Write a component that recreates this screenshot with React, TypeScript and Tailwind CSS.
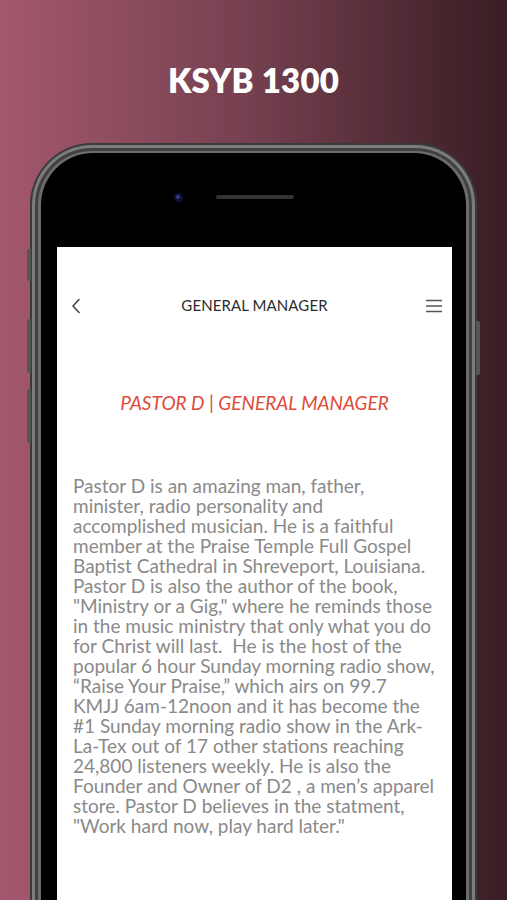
import React from 'react';

const bio =
  'Pastor D is an amazing man, father, minister, radio personality and accomplished musician. He is a faithful member at the Praise Temple Full Gospel Baptist Cathedral in Shreveport, Louisiana. Pastor D is also the author of the book, "Ministry or a Gig," where he reminds those in the music ministry that only what you do for Christ will last.  He is the host of the popular 6 hour Sunday morning radio show, \u201cRaise Your Praise,\u201d which airs on 99.7 KMJJ 6am-12noon and it has become the #1 Sunday morning radio show in the Ark-La-Tex out of 17 other stations reaching 24,800 listeners weekly. He is also the Founder and Owner of D2 , a men\u2019s apparel store. Pastor D believes in the statment, "Work hard now, play hard later."';

const App = () => {
  return (
    <div className="relative h-[900px] w-full overflow-hidden bg-gradient-to-r from-[#a4586e] via-[#74404f] to-[#3a1d24]">
      {/* headline */}
      <h1
        className="pt-[60px] text-center text-[33px] font-extrabold leading-[40px] tracking-[0.2px] text-white"
        style={{ fontFamily: 'Lato, "Noto Sans", sans-serif' }}
      >
        KSYB 1300
      </h1>

      {/* phone */}
      <div className="relative mx-auto mt-[43px] w-[447px]">
        {/* side buttons */}
        <div className="absolute left-[-3px] top-[106px] h-[32px] w-[4px] rounded-l-[2px] bg-[#555]" />
        <div className="absolute left-[-3px] top-[176px] h-[54px] w-[4px] rounded-l-[2px] bg-[#555]" />
        <div className="absolute left-[-3px] top-[246px] h-[54px] w-[4px] rounded-l-[2px] bg-[#555]" />
        <div className="absolute right-[-3px] top-[178px] h-[54px] w-[4px] rounded-r-[2px] bg-[#555]" />

        <div className="rounded-t-[62px] bg-[#3a3a3a] px-[2px] pt-[2px]">
          <div className="rounded-t-[60px] bg-[#7c7c7c] px-[3px] pt-[3px]">
            <div className="rounded-t-[57px] bg-[#404040] px-[3px] pt-[3px]">
              <div className="rounded-t-[54px] bg-[#6c6c6c] px-[3px] pt-[2px]">
                <div className="rounded-t-[52px] bg-black pl-[16px] pr-[14px] pt-[32px]">
                  {/* camera + speaker */}
                  <div className="flex h-[24px] items-center justify-center">
                    <div className="flex h-[9px] w-[9px] items-center justify-center rounded-full bg-[#0d1430]">
                      <div className="h-[4px] w-[4px] rounded-full bg-[#2b3f8a]" />
                    </div>
                    <div className="ml-[33px] h-[4px] w-[78px] rounded-full bg-[#333]" />
                    <div className="ml-[33px] w-[9px]" />
                  </div>

                  {/* screen */}
                  <div
                    className="mt-[38px] h-[670px] bg-white"
                    style={{ fontFamily: 'Lato, "Open Sans", sans-serif' }}
                  >
                    <div className="flex h-[118px] items-center justify-between px-[12px] pb-[1px]">
                      <svg width="14" height="16" viewBox="0 0 14 16" className="ml-[1px]">
                        <path d="M9 1.5 L3 8 L9 14.5" fill="none" stroke="#444" strokeWidth="1.6" strokeLinecap="round" strokeLinejoin="round" />
                      </svg>
                      <span className="text-[15px] font-normal tracking-[0.1px] text-[#2b2b2b]">GENERAL MANAGER</span>
                      <svg width="18" height="14" viewBox="0 0 18 14" className="mr-[-3px]">
                        <path d="M1 1.5 H17 M1 7 H17 M1 12.5 H17" fill="none" stroke="#555" strokeWidth="1.4" />
                      </svg>
                    </div>

                    <h2 className="mt-[26px] text-center text-[19px] italic leading-[24px] text-[#df4a3b]">
                      PASTOR D | GENERAL MANAGER
                    </h2>

                    <p className="mt-[61px] pl-[16px] pr-[16px] text-[19px] leading-[20px] text-[#8a8a8a] whitespace-pre-wrap">
                      {bio}
                    </p>
                  </div>
                </div>
              </div>
            </div>
          </div>
        </div>
      </div>
    </div>
  );
};

export default App;
